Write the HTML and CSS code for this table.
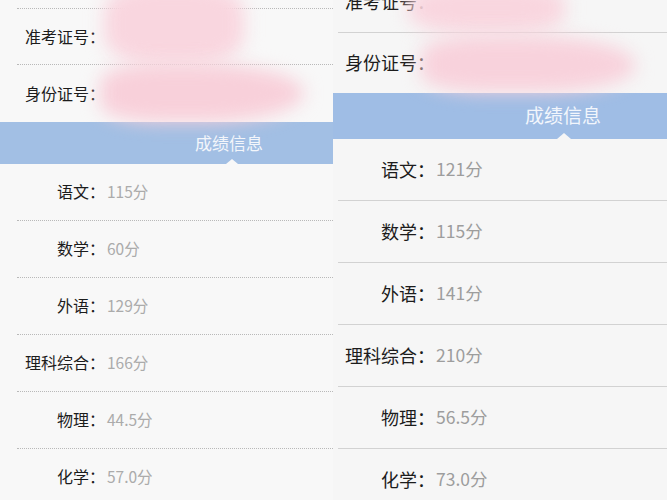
FILE: index.html
```html
<!DOCTYPE html>
<html lang="zh">
<head>
<meta charset="utf-8">
<title>成绩信息</title>
<link rel="stylesheet" href="styles.css">
</head>
<body>
<div class="screen">
  <section class="panel panel-left">
    <div class="spacer"></div>
    <div class="row row-first"><span class="label">准考证号：</span></div>
    <div class="row row-id"><span class="label">身份证号：</span></div>
    <div class="header"><span class="header-text">成绩信息</span><i class="notch"></i></div>
    <div class="row score"><span class="label">语文：</span><span class="value">115分</span></div>
    <div class="row score"><span class="label">数学：</span><span class="value">60分</span></div>
    <div class="row score"><span class="label">外语：</span><span class="value">129分</span></div>
    <div class="row score"><span class="label">理科综合：</span><span class="value">166分</span></div>
    <div class="row score"><span class="label">物理：</span><span class="value">44.5分</span></div>
    <div class="row score"><span class="label">化学：</span><span class="value">57.0分</span></div>
    <div class="smudge sl1"></div>
    <div class="smudge sl2"></div>
  </section>
  <section class="panel panel-right">
    <div class="row row-first"><span class="label">准考证号：</span></div>
    <div class="row row-id"><span class="label">身份证号：</span></div>
    <div class="header"><span class="header-text">成绩信息</span><i class="notch"></i></div>
    <div class="row score"><span class="label">语文：</span><span class="value">121分</span></div>
    <div class="row score"><span class="label">数学：</span><span class="value">115分</span></div>
    <div class="row score"><span class="label">外语：</span><span class="value">141分</span></div>
    <div class="row score"><span class="label">理科综合：</span><span class="value">210分</span></div>
    <div class="row score"><span class="label">物理：</span><span class="value">56.5分</span></div>
    <div class="row score"><span class="label">化学：</span><span class="value">73.0分</span></div>
    <div class="smudge sr1"></div>
    <div class="smudge sr2"></div>
  </section>
</div>
</body>
</html>
```

FILE: styles.css
```css
html, body {
  margin: 0;
  padding: 0;
  background: #f7f7f7;
}

.screen {
  display: flex;
  width: 667px;
  height: 500px;
  overflow: hidden;
  font-family: "Noto Sans CJK SC", "Noto Sans", sans-serif;
}

.panel {
  position: relative;
  display: flex;
  flex-direction: column;
  overflow: hidden;
  background: #f8f8f8;
}

.panel-left {
  width: 333px;
  flex: none;
}

.panel-right {
  width: 334px;
  flex: none;
  background: #f6f6f6;
}

.row {
  display: flex;
  align-items: center;
  flex: none;
  box-sizing: border-box;
}

.label {
  color: #1c1c1c;
  text-align: right;
  white-space: nowrap;
}

.value {
  white-space: nowrap;
}

/* ---------- left panel (iOS style) ---------- */
.panel-left .spacer {
  height: 9px;
  flex: none;
  margin-left: 17px;
  border-bottom: 1px dotted #b9b9b9;
  box-sizing: border-box;
}

.panel-left .row {
  height: 57px;
  margin-left: 17px;
  border-bottom: 1px dotted #b9b9b9;
  font-size: 16px;
  padding-bottom: 2px;
}

.panel-left .row-first {
  height: 56px;
}

.panel-left .row-id {
  height: 57px;
  border-bottom: none;
}

.panel-left .row.score:last-child {
  border-bottom: none;
}

.panel-left .label {
  width: 88px;
  margin-right: 2px;
}

.panel-left .value {
  color: #ababab;
  font-size: 15.5px;
}

.panel-left .header {
  position: relative;
  height: 42px;
  flex: none;
  display: flex;
  align-items: center;
  padding-left: 195px;
  padding-bottom: 2px;
  box-sizing: border-box;
  background: #a2bfe4;
  color: #f3f6fb;
  font-size: 17px;
}

.panel-left .notch {
  position: absolute;
  left: 226px;
  bottom: 0;
  width: 0;
  height: 0;
  border-left: 6px solid transparent;
  border-right: 6px solid transparent;
  border-bottom: 5px solid #f8f8f8;
}

/* ---------- right panel (Android style) ---------- */
.panel-right .row {
  height: 62px;
  margin-left: 5px;
  border-bottom: 1px solid #d2d2d2;
  font-size: 18px;
  padding-bottom: 2px;
}

.panel-right .row-first {
  margin-top: -29px;
}

.panel-right .row-id {
  height: 60px;
  border-bottom: none;
}

.panel-right .label {
  width: 90px;
  margin-left: 7px;
  margin-right: 1px;
}

.panel-right .value {
  color: #9d9d9d;
  font-size: 17.5px;
}

.panel-right .header {
  position: relative;
  height: 46px;
  flex: none;
  display: flex;
  align-items: center;
  padding-left: 192px;
  padding-bottom: 3px;
  box-sizing: border-box;
  background: #9fbde5;
  color: #f2f6fc;
  font-size: 19px;
}

.panel-right .notch {
  position: absolute;
  left: 224px;
  bottom: 0;
  width: 0;
  height: 0;
  border-left: 7px solid transparent;
  border-right: 7px solid transparent;
  border-bottom: 6px solid #f6f6f6;
}

/* ---------- redaction smudges ---------- */
.smudge {
  position: absolute;
  background: #f8d4dd;
  filter: blur(9px);
  border-radius: 35%;
}

.sl1 {
  left: 104px;
  top: -16px;
  width: 140px;
  height: 80px;
  background: #f9d6df;
}

.sl2 {
  left: 100px;
  top: 64px;
  width: 204px;
  height: 58px;
  border-radius: 30% 50% 50% 30%;
  background: #f8d0da;
}

.sr1 {
  left: 76px;
  top: -16px;
  width: 156px;
  height: 48px;
  background: #f9d6df;
}

.sr2 {
  left: 88px;
  top: 36px;
  width: 214px;
  height: 56px;
  border-radius: 30% 50% 45% 30%;
  background: #f8d2dc;
}
```
